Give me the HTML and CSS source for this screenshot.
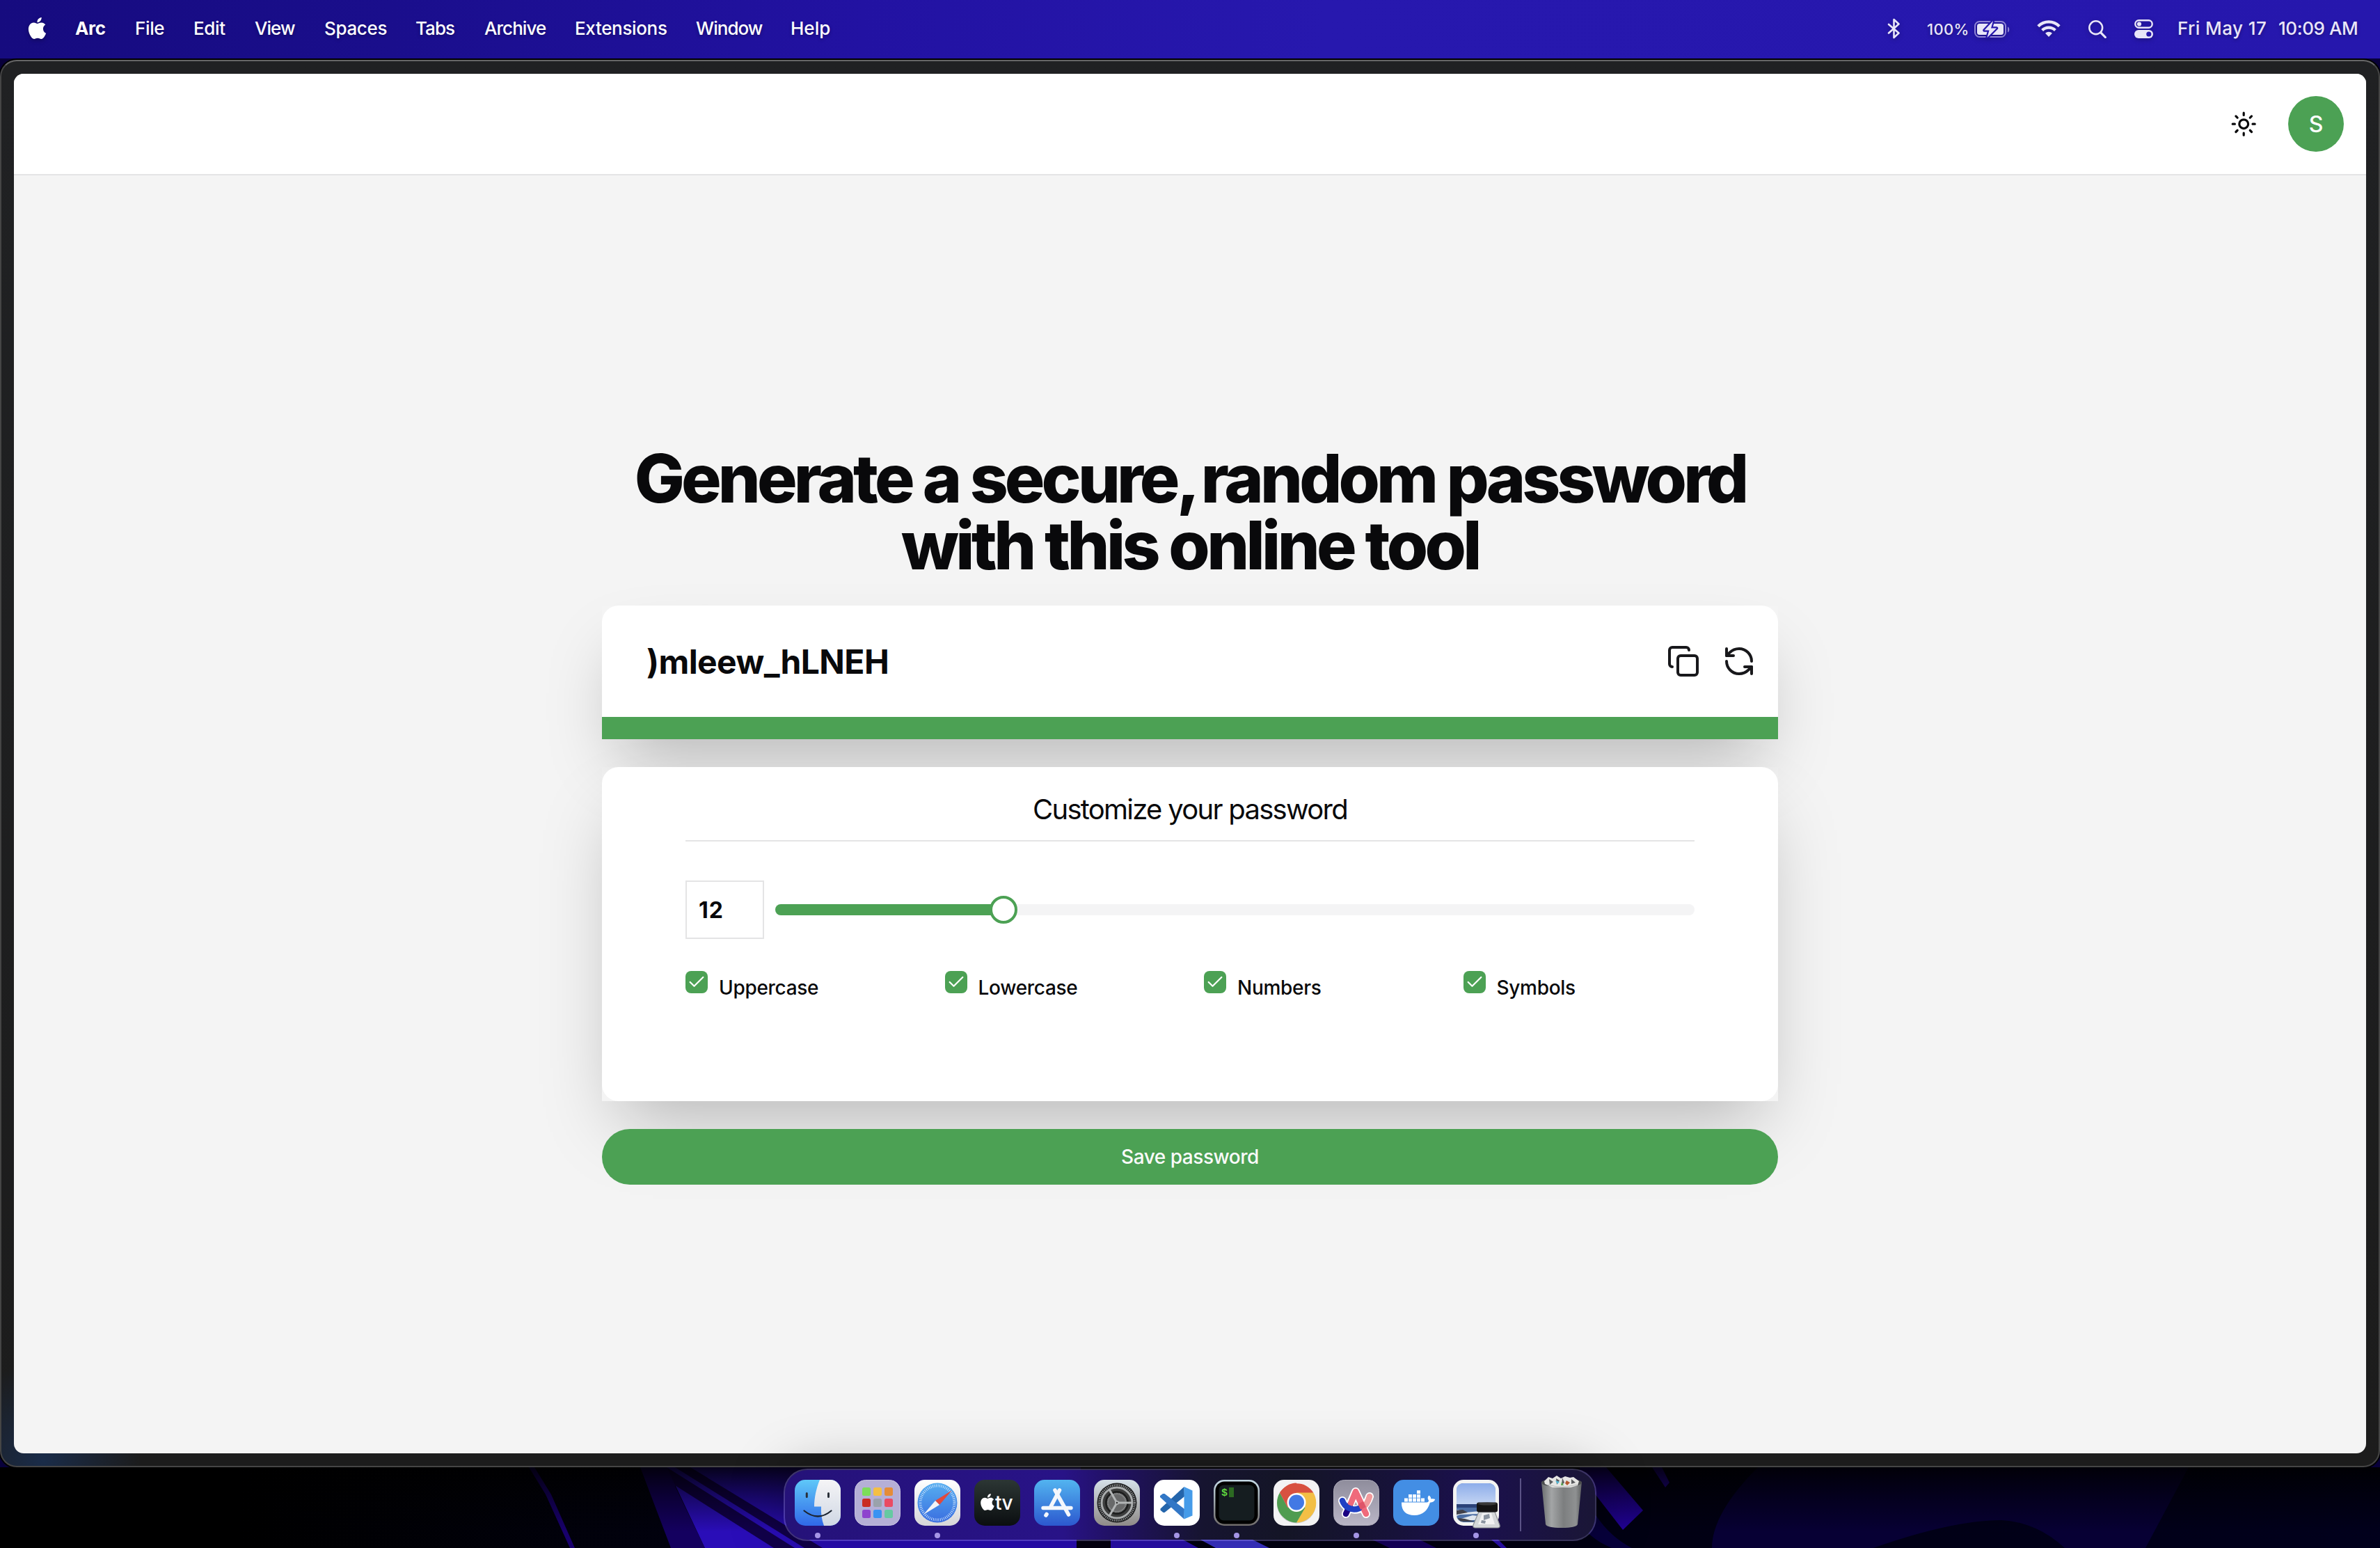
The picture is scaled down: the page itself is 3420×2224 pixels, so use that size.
FILE: index.html
```
<!DOCTYPE html>
<html lang="en">
<head>
<meta charset="utf-8">
<title>Password generator</title>
<link rel="stylesheet" href="styles.css">
</head>
<body>
<svg width="0" height="0" class="defs" aria-hidden="true">
  <defs>
    <path id="apple" d="M12.152 6.896c-.948 0-2.415-1.078-3.96-1.04-2.04.027-3.91 1.183-4.961 3.014-2.117 3.675-.546 9.103 1.519 12.09 1.013 1.454 2.208 3.09 3.792 3.039 1.52-.065 2.09-.987 3.935-.987 1.831 0 2.35.987 3.96.948 1.637-.026 2.676-1.48 3.676-2.948 1.156-1.688 1.636-3.325 1.662-3.415-.039-.013-3.182-1.221-3.22-4.857-.026-3.04 2.48-4.494 2.597-4.559-1.429-2.09-3.623-2.324-4.39-2.376-2-.156-3.675 1.09-4.61 1.09zM15.53 3.83c.843-1.012 1.4-2.427 1.245-3.83-1.207.052-2.662.805-3.532 1.818-.78.896-1.454 2.338-1.273 3.714 1.338.104 2.715-.688 3.559-1.701"/>
    <clipPath id="tile"><rect width="66" height="66" rx="15"/></clipPath>
  </defs>
</svg>
<div class="desktop">
  <header class="menubar">
    <svg class="apple" viewBox="0 0 24 24" fill="#fff"><use href="#apple"/></svg>
    <nav class="menus">
      <span class="app">Arc</span><span>File</span><span>Edit</span><span class="tight">View</span><span>Spaces</span><span class="tight">Tabs</span><span class="tight">Archive</span><span>Extensions</span><span class="tight">Window</span><span class="loose">Help</span>
    </nav>
    <div class="status">
      <svg class="bt" viewBox="0 0 19 30" fill="none" stroke="#e9e6f8" stroke-width="2.6" stroke-linejoin="round" stroke-linecap="round"><path d="M2 9l14.5 12.500L9.500 28V2l7 6.500L2 21.500"/></svg>
      <span class="percent">100%</span>
      <svg class="battery" viewBox="0 0 51 25">
        <rect x="1" y="1" width="44" height="22" rx="6.500" fill="none" stroke="#8f83d6" stroke-width="2"/>
        <path d="M48 8.500c3 .8 3 7.200 0 8z" fill="#8f83d6"/>
        <rect x="4" y="4" width="38" height="16" rx="3.500" fill="#e9e6f8"/>
        <path d="M27 0L14.500 13.500h7L18.500 24 32 10.500h-8z" fill="#e9e6f8" stroke="#2617ab" stroke-width="4.500" stroke-linejoin="round"/>
        <path d="M27 0L14.500 13.500h7L18.500 24 32 10.500h-8z" fill="#e9e6f8"/>
      </svg>
      <svg class="wifi" viewBox="0 0 34 25" fill="none" stroke="#e9e6f8" stroke-width="4.200"><path d="M1.800 9.700a21.500 21.500 0 0 1 30.400 0"/><path d="M7.600 15.600a13.300 13.300 0 0 1 18.800 0"/><path d="M17 25l-5-5.200a7.200 7.200 0 0 1 10 0z" fill="#e9e6f8" stroke="none"/></svg>
      <svg class="search" viewBox="0 0 26 26" fill="none" stroke="#e9e6f8" stroke-linecap="round"><circle cx="10.700" cy="10.700" r="9.400" stroke-width="2.600"/><path d="M17.800 17.800l6.500 6.700" stroke-width="3.200"/></svg>
      <svg class="cc" viewBox="0 0 27 27"><rect x="1.300" y="1.300" width="24.400" height="10.400" rx="5.200" fill="none" stroke="#e9e6f8" stroke-width="2.400"/><circle cx="7" cy="6.500" r="3.100" fill="#e9e6f8"/><rect y="15" width="27" height="12" rx="6" fill="#e9e6f8"/><circle cx="20.800" cy="21" r="3.600" fill="#2617ab"/></svg>
      <span class="date">Fri May 17</span><span class="time">10:09 AM</span>
    </div>
  </header>

  <div class="window">
    <div class="page">
      <div class="topbar">
        <svg class="sun" viewBox="0 0 24 24" fill="none" stroke="#09090b" stroke-width="2" stroke-linecap="round"><circle cx="12" cy="12" r="4"/><path d="M12 2v2M12 20v2M4.930 4.930l1.410 1.410M17.660 17.660l1.410 1.410M2 12h2M20 12h2M6.340 17.660l-1.410 1.410M19.070 4.930l-1.410 1.410"/></svg>
        <div class="avatar">S</div>
      </div>
      <main class="main">
        <h1 class="title"><span class="line-one">Generate a secure<span class="comma">, </span>random password</span><br><span class="line-two">with this online tool</span></h1>
        <section class="panel">
          <div class="result">
            <span class="password">)mleew_hLNEH</span>
            <svg class="action" viewBox="0 0 24 24"><rect width="14" height="14" x="8" y="8" rx="2"/><path d="M4 16c-1.100 0-2-.9-2-2V4c0-1.100.9-2 2-2h10c1.100 0 2 .9 2 2"/></svg>
            <svg class="action" viewBox="0 0 24 24"><path d="M21 12a9 9 0 0 0-9-9 9.750 9.750 0 0 0-6.740 2.740L3 8"/><path d="M3 3v5h5"/><path d="M3 12a9 9 0 0 0 9 9 9.750 9.750 0 0 0 6.740-2.740L21 16"/><path d="M16 16h5v5"/></svg>
          </div>
          <div class="strength"></div>
        </section>
        <section class="panel">
          <div class="options">
            <h2 class="subtitle">Customize your password</h2>
            <div class="length">
              <div class="number">12</div>
              <div class="slider"><div class="fill" style="width:24.800%"><span class="thumb"></span></div></div>
            </div>
            <div class="checks">
              <label class="check"><span class="box"><svg viewBox="0 0 24 24"><path d="M20 6L9 17l-5-5"/></svg></span>Uppercase</label>
              <label class="check"><span class="box"><svg viewBox="0 0 24 24"><path d="M20 6L9 17l-5-5"/></svg></span>Lowercase</label>
              <label class="check"><span class="box"><svg viewBox="0 0 24 24"><path d="M20 6L9 17l-5-5"/></svg></span>Numbers</label>
              <label class="check"><span class="box"><svg viewBox="0 0 24 24"><path d="M20 6L9 17l-5-5"/></svg></span>Symbols</label>
            </div>
          </div>
        </section>
        <button class="save">Save password</button>
      </main>
    </div>
  </div>

  <div class="shelf">
    <svg class="wallpaper" viewBox="0 0 3420 116" preserveAspectRatio="none">
      <defs>
        <linearGradient id="fade" x2="0" y2="1"><stop stop-color="#000" stop-opacity=".85"/><stop offset=".35" stop-color="#000" stop-opacity=".45"/><stop offset=".8" stop-color="#000" stop-opacity="0"/></linearGradient>
        <linearGradient id="base"><stop offset=".1" stop-color="#000"/><stop offset=".3" stop-color="#01010f"/><stop offset=".7" stop-color="#010013"/><stop offset="1" stop-color="#01001c"/></linearGradient>
      </defs>
      <rect width="3420" height="116" fill="url(#base)"/>
      <path d="M760 0h8l24 39 34 77h-7L784 39z" fill="#18006c"/>
      <path d="M920 0h50v27l43 89h-49z" fill="#14005f"/>
      <path d="M969 23L1013 116h540V0H958z" fill="#2a0db8"/>
      <path d="M958 0l12 26 142 90h30z" fill="#11004a"/>
      <path d="M970 0h22l190 116h-26z" fill="#11004a"/>
      <path d="M1547 104h49v12h-49z" fill="#040010"/>
      <path d="M1596 104h104l22 12H1596z" fill="#2a0fb0"/>
      <path d="M1725 104h75l24 12h-77z" fill="#3b33cc"/>
      <path d="M1972 104h68l24 12h-67z" fill="#160060"/>
      <path d="M2143 104h10l12 12h-8z" fill="#2a0fb0"/>
      <path d="M2270 0h38l53 62-29 28-62-80z" fill="#22029a"/>
      <path d="M2374 0h14l11 22-6 7z" fill="#22029a"/>
      <path d="M2270 60l24 10q20 30 51 46h-29q-30-12-46-36z" fill="#07003c"/>
      <path d="M2526 0h619l-62 116H2967q-40-37-91-40-70 0-184 40H2460q0-50 66-116z" fill="#070034"/>
      <rect width="3420" height="116" fill="url(#fade)"/>
    </svg>
    <div class="dock">
      <div class="item running"><svg viewBox="0 0 66 66">
        <defs><linearGradient id="fb" x2="0" y2="1"><stop stop-color="#5fc8f8"/><stop offset="1" stop-color="#3068e8"/></linearGradient><linearGradient id="fw" x2="0" y2="1"><stop stop-color="#f5f4f6"/><stop offset="1" stop-color="#d0d8e4"/></linearGradient></defs>
        <g clip-path="url(#tile)"><rect width="66" height="66" fill="url(#fb)"/><path d="M36 0c-5 12-8 26-8 38.500h10c-.6 9 .8 19 4 27.500h24V0z" fill="url(#fw)"/></g>
        <path d="M17.300 19.500v5M48.500 19.500v5" stroke="#2a3038" stroke-width="3" stroke-linecap="round"/><path d="M13.500 44.500q20 16 39 0" fill="none" stroke="#1c2430" stroke-width="2.200" stroke-linecap="round"/></svg></div>
      <div class="item"><svg viewBox="0 0 66 66"><rect x=".5" y=".5" width="65" height="65" rx="15" fill="#b5afd6" stroke="#c9c4e2"/>
        <rect x="11" y="11" width="12" height="12" rx="2.500" fill="#7ddd5a"/><rect x="27" y="11" width="12" height="12" rx="2.500" fill="#f4bf45"/><rect x="43" y="11" width="12" height="12" rx="2.500" fill="#e58c38"/>
        <rect x="11" y="27" width="12" height="12" rx="2.500" fill="#c92d22"/><rect x="27" y="27" width="12" height="12" rx="2.500" fill="#9aa2ab"/><rect x="43" y="27" width="12" height="12" rx="2.500" fill="#ea4a63"/>
        <rect x="11" y="43" width="12" height="12" rx="2.500" fill="#8e43ce"/><rect x="27" y="43" width="12" height="12" rx="2.500" fill="#3a93f2"/><rect x="43" y="43" width="12" height="12" rx="2.500" fill="#66c9a2"/></svg></div>
      <div class="item running"><svg viewBox="0 0 66 66">
        <defs><linearGradient id="sf" x2="0" y2="1"><stop stop-color="#fff"/><stop offset="1" stop-color="#d6d6d8"/></linearGradient><linearGradient id="sb" x2="0" y2="1"><stop stop-color="#57aef0"/><stop offset="1" stop-color="#3a6ee0"/></linearGradient></defs>
        <rect width="66" height="66" rx="15" fill="url(#sf)"/><circle cx="33" cy="33" r="28.500" fill="url(#sb)"/><circle cx="33" cy="33" r="24.500" fill="none" stroke="#d8eafc" stroke-width="4" stroke-dasharray=".8 1.765"/>
        <path d="M53.500 15.500L36 36l-6-6z" fill="#e2493c"/><path d="M13 50l17-20 6 6z" fill="#f4f4f6"/></svg></div>
      <div class="item"><svg viewBox="0 0 66 66"><defs><linearGradient id="tv" x2="0" y2="1"><stop stop-color="#2c3634"/><stop offset="1" stop-color="#0b0e10"/></linearGradient></defs>
        <rect width="66" height="66" rx="15" fill="url(#tv)"/><g transform="translate(7 20)" fill="#fff"><use href="#apple"/></g><text x="30" y="43" class="tv-text">tv</text></svg></div>
      <div class="item"><svg viewBox="0 0 66 66"><defs><linearGradient id="as" x2="0" y2="1"><stop stop-color="#52b4f0"/><stop offset="1" stop-color="#2c58cf"/></linearGradient></defs>
        <rect width="66" height="66" rx="15" fill="url(#as)"/><g stroke="#f4f7fc" stroke-linecap="round" fill="none"><path d="M36.500 15L24.500 37.500M18 49.500l-1 1.500" stroke-width="5.600"/><path d="M13 40.500h40" stroke-width="5.400"/><path d="M30 15l19.500 35" stroke-width="5.600"/></g></svg></div>
      <div class="item"><svg viewBox="0 0 66 66"><defs><linearGradient id="st" x2="0" y2="1"><stop stop-color="#d5e0e8"/><stop offset="1" stop-color="#8f8b88"/></linearGradient></defs>
        <rect width="66" height="66" rx="15" fill="url(#st)"/><circle cx="33" cy="33" r="28.500" fill="#1e1f20"/><circle cx="33" cy="33" r="25.500" fill="none" stroke="#8e9192" stroke-width="3" stroke-dasharray="1.300 1.370"/><circle cx="33" cy="33" r="22" fill="#3c3d3d" stroke="#a9acad" stroke-width="3"/><circle cx="33" cy="33" r="15.500" fill="#68696a" stroke="#1d1e1e" stroke-width="3"/><circle cx="33" cy="33" r="13" fill="none" stroke="#8d8f90" stroke-width="2.500" stroke-dasharray="1.200 1"/>
        <path d="M33 33h22M33 33L22 14M33 33L22 52" stroke="#b2b5b6" stroke-width="3"/><circle cx="33" cy="33" r="3" fill="#b2b5b6"/><circle cx="33" cy="33" r="1.300" fill="#333"/></svg></div>
      <div class="item running"><svg viewBox="0 0 66 66"><rect width="66" height="66" rx="15" fill="#fff"/>
        <path d="M43.500 10L9.500 41.500v2.300l4 3.200 2 0L44 24z" fill="#2465ab"/><path d="M43.500 56.500L9 25v-2l4-3 2.500 0L44 42z" fill="#3277c6"/><path d="M43.500 10L55.500 15.500v36L43.500 56.500z" fill="#459be9"/></svg></div>
      <div class="item running"><svg viewBox="0 0 66 66"><defs><linearGradient id="tm" x2="0" y2="1"><stop stop-color="#c5dbe6"/><stop offset="1" stop-color="#6f6b6a"/></linearGradient></defs>
        <rect width="66" height="66" rx="15" fill="url(#tm)"/><rect x="2.500" y="2.500" width="61" height="61" rx="13" fill="#000"/><rect x="7.500" y="7.500" width="51" height="51" rx="7" fill="#151d20"/><text x="11" y="23" class="prompt">$</text><rect x="22" y="11" width="7" height="14" fill="#2c6a22"/></svg></div>
      <div class="item"><svg viewBox="0 0 66 66"><rect width="66" height="66" rx="15" fill="#f3f3f4"/><circle cx="33" cy="34.500" r="28" fill="#c9c9cb"/>
        <path d="M33 33L9 18.500a28.500 28.500 0 0 1 48.300 0z" fill="#d85140"/><path d="M33 33V18.500h24.300A28.500 28.500 0 0 1 33 61.500l12.500-22z" fill="#f3bf45"/><path d="M33 33l12.500 7L33 61.500A28.500 28.500 0 0 1 9 18.500L20.500 40z" fill="#4f9c50"/><path d="M33 33L20.500 40 9 18.500q10-14 24-14V20z" fill="#d85140"/><circle cx="33" cy="32.500" r="13.500" fill="#fff"/><circle cx="33" cy="32.500" r="11" fill="#4379e4"/></svg></div>
      <div class="item running"><svg viewBox="0 0 66 66"><defs><linearGradient id="ar" x2="0" y2="1"><stop stop-color="#8f8d9c"/><stop offset="1" stop-color="#b9b5c6"/></linearGradient></defs>
        <rect x=".5" y=".5" width="65" height="65" rx="15" fill="url(#ar)" stroke="#aaa8b6"/>
        <g fill="none" stroke-linecap="round" stroke-linejoin="round"><g stroke="#fff" stroke-width="12"><path d="M18 49L32 17l15 32"/><path d="M13 30c4 14 30 22 39-6"/></g>
        <path d="M24 36l-6 13" stroke="#1b0082" stroke-width="8.500"/><path d="M52 24q-3 11-9 15" stroke="#f19a9c" stroke-width="8.500"/><path d="M25 34l7-17 15 32" stroke="#ef6a7b" stroke-width="8.500"/><path d="M13 30c3 9 13 15.500 24 11" stroke="#2140c4" stroke-width="8.500"/><path d="M39 33l4 8" stroke="#df5468" stroke-width="8.500" stroke-linecap="butt"/></g></svg></div>
      <div class="item"><svg viewBox="0 0 66 66"><rect width="66" height="66" rx="15" fill="#438ee4"/><g fill="#fff"><path d="M12 32.500h36c2 0 3-1.200 3-3-2-2.200-1.500-5 .3-7 2.200 1.200 3 3 3 5 2-.6 4.200-.4 6 .6-1.200 3-3.600 4.600-7.400 4.600C49.500 44.500 42 51 30.500 51 18 51 11.500 44 12 32.500z"/><path d="M16 26.500h5v5h-5zM22 26.500h5v5h-5zM28 26.500h5v5h-5zM34 26.500h5v5h-5zM40 26.500h5v5h-5zM22 21h5v4.700h-5zM28 21h5v4.700h-5zM34 21h5v4.700h-5zM34 15.300h5V20h-5z"/></g></svg></div>
      <div class="item running"><svg class="overflowing" viewBox="0 0 66 66"><defs><linearGradient id="pv" x2="0" y2="1"><stop stop-color="#8dadea"/><stop offset="1" stop-color="#c3d4f3"/></linearGradient></defs>
        <rect width="66" height="66" rx="15" fill="#f4f4f3"/><rect x="5" y="5" width="56" height="56" rx="10" fill="#4b6da4"/><path d="M5 35V15Q5 5 15 5h36q10 0 10 10v20z" fill="url(#pv)"/><path d="M5 35h56v5H5z" fill="#2b4279"/><path d="M6 43q8 2 12 4l20-2v4l-28 1-5 2zM8 57l20-6 16 2v4l-30 2z" fill="#dfe6ee"/><path d="M5 44l9-1 7 4-16 3zM7 55l10 1 14 4H15q-6 0-8-5z" fill="#40404a"/>
        <path d="M37 46h23l7 19q1 4-3 4H32q-4 0-3-4z" fill="#d4d7d9" stroke="#8d9194" stroke-width="1.200"/><path d="M42 48l-6 16h24l-5-16z" fill="#f1f2f2"/><path d="M44 51l8-2 1 6-9 3zM41 58l6 1-1 4-6-1z" fill="#8a94a0"/><rect x="34" y="32.500" width="30" height="14" rx="3" fill="#141414"/><ellipse cx="49" cy="34.500" rx="13.500" ry="2" fill="#3a3a3a"/></svg></div>
      <div class="divider"></div>
      <svg class="trash" viewBox="0 0 60 78"><defs><linearGradient id="tr"><stop stop-color="#6a6d6e"/><stop offset=".25" stop-color="#a3a5a6"/><stop offset=".55" stop-color="#7c7e7f"/><stop offset=".85" stop-color="#8f9192"/><stop offset="1" stop-color="#5d5f60"/></linearGradient></defs>
        <path d="M1 10q29-9 58 0l-6 61q-2 5-23 5T7 71z" fill="url(#tr)"/><ellipse cx="30" cy="11" rx="29" ry="6.500" fill="#4a4c4d"/>
        <path d="M5 9l6-6 6 2 6-4 6 4 6-3 7 2 5-1 8 6-2 6-10 3H17L6 13z" fill="#e6e6e4"/><path d="M12 6l6 4-5 4zM22 5l5 3-4 6zM44 6l6 5-6 2zM31 4l3 7-4 4z" fill="#5b5d60"/><path d="M21 8l6 2-3 3z" fill="#4fb9d8"/><path d="M37 8l5 3-4 4-3-3z" fill="#b5582e"/><path d="M30 10l3 5h-4z" fill="#59a14f"/><path d="M10 14q20 6 42 0" fill="none" stroke="#b9bbbb" stroke-width="1.200"/></svg>
    </div>
  </div>
</div>
</body>
</html>
```
FILE: styles.css
```
* { box-sizing: border-box; }
body { margin: 0; font-family: "Inter", "Liberation Sans", sans-serif; color: #09090b; background: #000; }
svg { display: block; flex: none; }
.defs { position: absolute; }

.desktop {
  width: 3420px; height: 2224px; overflow: hidden;
  display: flex; flex-direction: column;
}

/* Menu bar */
.menubar {
  flex: none; height: 86px; padding: 0 32px 5px 38px;
  display: flex; align-items: center;
  color: #fff; font-size: 26px; font-weight: 500; white-space: nowrap;
  background: linear-gradient(90deg, #160b7f 0, #1a0e8c 560px, #2212a2 1240px, #2718ae 1900px, #2617ad 100%);
}
.apple { width: 31px; height: 31px; margin-right: 39px; filter: drop-shadow(0 2px 3px rgb(0 0 0 / .3)); }
.menus {
  display: grid; grid-template-columns: 86px 84px 88px 100px 131px 99px 130px 174px 136px auto;
  letter-spacing: -.35px; text-shadow: 0 2px 5px rgb(0 0 0 / .3);
}
.menus .app { font-weight: 700; }
.menus .tight { letter-spacing: -.95px; }
.menus .loose { letter-spacing: 0; }
.status { margin-left: auto; display: flex; align-items: center; color: #e9e6f8; text-shadow: 0 2px 5px rgb(0 0 0 / .3); }
.status svg { filter: drop-shadow(0 2px 3px rgb(0 0 0 / .25)); }
.bt { width: 19px; height: 30px; margin-right: 38px; }
.percent { width: 68px; font-size: 22px; letter-spacing: .3px; padding-top: 3px; }
.battery { width: 51px; height: 25px; margin: 3px 39px 0 0; }
.wifi { width: 34px; height: 25px; margin-right: 40px; }
.search { width: 26px; height: 26px; margin: 3px 40px 0 0; }
.cc { width: 27px; height: 27px; margin: 2px 35px 0 0; }
.date { width: 145px; letter-spacing: .4px; }
.time { width: 114px; letter-spacing: -.43px; }

/* Browser window */
.window {
  flex: none; height: 2022px; padding: 18px;
  border: 2px solid #454545; border-top-color: #666; border-radius: 24px;
  background: radial-gradient(circle at 60px 2010px, #1a2c49 0, transparent 140px), linear-gradient(#202123, #1c1c1c);
  box-shadow: 0 0 0 2px #000, 0 0 0 30px #08003a;
  clip-path: inset(-2px 0 0 0);
}
.page { height: 100%; border-radius: 14px; overflow: hidden; background: #f4f4f4; display: flex; flex-direction: column; }
.topbar {
  flex: none; height: 146px; padding: 0 32px; background: #fff; border-bottom: 2px solid #e4e4e5;
  display: flex; align-items: center; justify-content: flex-end; gap: 45px;
}
.sun { width: 38.400px; height: 38.400px; }
.avatar {
  width: 80px; height: 80px; border-radius: 50%; background: #4ca154; color: #fff;
  display: grid; place-items: center; font-size: 32px; font-weight: 550;
}
.main {
  width: 1690px; margin: 0 auto; padding-top: 387px;
  display: flex; flex-direction: column; gap: 40px;
}
.title { margin: 0 -40px -1px; font-size: 96px; line-height: 96px; font-weight: 800; text-align: center; white-space: nowrap; }
.line-one { letter-spacing: -4.850px; }
.comma { letter-spacing: -7.800px; }
.line-two { letter-spacing: -4.600px; }

.panel { box-shadow: 0 50px 100px -24px rgb(0 0 0 / .25); }
.result {
  height: 160px; padding: 0 32px 0 64px; background: #fff; border-radius: 24px 24px 0 0;
  display: flex; align-items: center; gap: 32px;
}
.password { flex: 1; font-size: 48px; font-weight: 700; letter-spacing: -.6px; }
.action { width: 48px; height: 48px; fill: none; stroke: #18181b; stroke-width: 2; stroke-linecap: round; stroke-linejoin: round; }
.strength { height: 32px; background: #4ca154; }

.options { height: 480px; padding: 33px 120px 0; background: #fff; border-radius: 24px; }
.subtitle {
  margin: 0 0 56px; padding-bottom: 16px; border-bottom: 2px solid #e4e4e5;
  font-size: 40px; line-height: 56px; font-weight: 400; letter-spacing: -1.720px; text-align: center;
}
.length { display: flex; align-items: center; gap: 16px; }
.number {
  width: 113px; height: 84px; padding-left: 17px; border: 2px solid #e4e4e5;
  display: flex; align-items: center; font-size: 32px; font-weight: 700; letter-spacing: 1px;
}
.slider { flex: 1; height: 16px; border-radius: 8px; background: #f4f4f5; }
.fill { height: 16px; border-radius: 8px 0 0 8px; background: #4ca154; display: flex; align-items: center; justify-content: flex-end; }
.thumb { flex: none; width: 40px; height: 40px; margin-right: -20px; border: 4px solid #4ca154; border-radius: 50%; background: #fff; }
.checks { margin-top: 46px; display: grid; grid-template-columns: repeat(4, 1fr); gap: 40px; }
.check { display: flex; gap: 16px; font-size: 28px; line-height: 48px; font-weight: 500; letter-spacing: -.3px; }
.box { flex: none; width: 32px; height: 32px; border-radius: 8px; background: #4ca154; display: grid; place-items: center; }
.box svg { width: 28px; height: 28px; fill: none; stroke: #fff; stroke-width: 1.900; stroke-linecap: round; stroke-linejoin: round; }
.save {
  height: 80px; border: 0; border-radius: 40px; background: #4ca154; color: #fafafa;
  font: 500 28px "Inter", "Liberation Sans", sans-serif; letter-spacing: -.470px; position: relative;
}

/* Dock */
.shelf { position: relative; height: 116px; display: flex; justify-content: center; align-items: flex-start; padding-top: 2px; }
.wallpaper { position: absolute; inset: 0; width: 3420px; height: 116px; }
.dock {
  position: relative; width: 1168px; height: 104px; padding: 14px 12px 0 14px;
  border: 2px solid rgb(140 130 200 / .4); border-radius: 34px;
  display: flex; align-items: flex-start; gap: 20px;
  background: linear-gradient(90deg, #251279 0, #281387 400px, #221168 460px, #161430 600px, #141526 720px, #17123a 880px, #1b104e 990px, #1a1636 100%);
  background-clip: padding-box;
  box-shadow: 0 0 80px rgb(0 0 0 / .26);
}
.item { flex: none; width: 66px; display: flex; flex-direction: column; align-items: center; }
.item > svg { width: 66px; height: 66px; }
.item .overflowing { overflow: visible; }
.running::after { content: ""; width: 8px; height: 8px; margin-top: 10px; border-radius: 50%; background: #a595e6; }
.divider { flex: none; width: 2px; height: 76px; margin: -2px 8px 0 10px; background: #5a5285; }
.trash { width: 60px; height: 78px; margin-top: -7px; }
.tv-text { font: 500 28px "Inter", sans-serif; fill: #fff; letter-spacing: -.5px; }
.prompt { font: 700 15px "Liberation Mono", monospace; fill: #5fd53f; }
```
